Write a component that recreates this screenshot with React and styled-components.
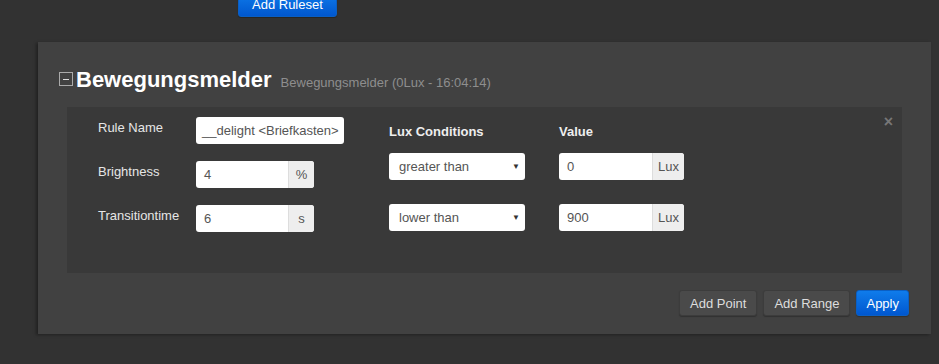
import styled, { createGlobalStyle } from "styled-components";

const GlobalStyle = createGlobalStyle`
  html, body {
    margin: 0;
    padding: 0;
    background: #323232;
    font-family: "Liberation Sans", Arial, sans-serif;
  }
`;

const Page = styled.div`
  width: 939px;
  height: 364px;
  overflow: hidden;
  background: #323232;
`;

const TopBar = styled.div`
  height: 18px;
  display: flex;
  align-items: flex-end;
  padding-left: 238px;
  overflow: hidden;
`;

const Button = styled.button`
  height: 26px;
  padding: 0 ${(p) => p.$pad || 10}px;
  font-family: inherit;
  font-size: 13px;
  border-radius: 3px;
  cursor: pointer;
  color: ${(p) => (p.$primary ? "#fff" : "#ddd")};
  background: ${(p) =>
    p.$primary ? "linear-gradient(#0f7ceb, #0057cf)" : "#4a4a4a"};
  border: 1px solid ${(p) => (p.$primary ? "#0a5fc4" : "#3c3c3c")};
  box-shadow: 0 1px 1px rgba(0, 0, 0, 0.25);
`;

const RulesetButton = styled(Button)`
  margin-bottom: 1px;
`;

const Panel = styled.div`
  margin: 24px 0 0 38px;
  width: 893px;
  height: 292px;
  box-sizing: border-box;
  background: #414141;
  box-shadow: -2px 1px 3px rgba(0, 0, 0, 0.35);
  padding: 25px 22px 0 21px;
`;

const TitleRow = styled.div`
  display: flex;
  align-items: baseline;
  gap: 3px;
  height: 33px;
`;

const Toggle = styled.span`
  position: relative;
  width: 12px;
  height: 12px;
  border: 1px solid #aaa;
  align-self: flex-start;
  margin-top: 5px;
  &::after {
    content: "";
    position: absolute;
    left: 3px;
    right: 3px;
    top: 5.5px;
    height: 1px;
    background: #ddd;
  }
`;

const Title = styled.h2`
  margin: 0;
  font-size: 22px;
  font-weight: bold;
  color: #fff;
`;

const Subtitle = styled.span`
  margin-left: 6px;
  font-size: 13px;
  color: #8e8e8e;
`;

const Well = styled.div`
  position: relative;
  margin: 7px 7px 0 8px;
  height: 166px;
  background: #393939;
  display: flex;
  padding: 10px 0 0 31px;
  box-sizing: border-box;
`;

const Close = styled.span`
  position: absolute;
  right: 9px;
  top: 6px;
  font-size: 16px;
  font-weight: bold;
  color: #777;
`;

const Form = styled.div`
  display: flex;
  flex-direction: column;
  gap: 17px;
  width: 291px;
`;

const FormRow = styled.div`
  display: flex;
  height: 27px;
`;

const Label = styled.label`
  width: 98px;
  padding-top: 3px;
  font-size: 13px;
  color: #e6e6e6;
`;

const InputGroup = styled.div`
  display: flex;
  width: ${(p) => p.$width}px;
  height: 27px;
  background: #fff;
  border-radius: 3px;
  overflow: hidden;
  box-sizing: border-box;
`;

const Field = styled.span`
  flex: 1;
  display: flex;
  align-items: center;
  padding-left: ${(p) => p.$pad || 8}px;
  font-size: 13px;
  color: #555;
  white-space: nowrap;
  overflow: hidden;
`;

const Addon = styled.span`
  width: ${(p) => p.$width}px;
  display: flex;
  align-items: center;
  justify-content: center;
  background: #eee;
  border-left: 1px solid #ddd;
  font-size: 13px;
  color: #555;
`;

const Table = styled.div`
  display: grid;
  grid-template-columns: 170px 125px;
  grid-template-rows: 36px 27px 27px;
  align-content: start;
  & > :nth-child(n + 5) {
    margin-top: 24px;
  }
`;

const HeadCell = styled.div`
  padding-top: 7px;
  font-size: 13px;
  font-weight: bold;
  color: #eee;
`;

const Select = styled.div`
  width: 136px;
  height: 27px;
  background: #fff;
  border-radius: 3px;
  display: flex;
  align-items: center;
  justify-content: space-between;
  padding: 0 5px 0 10px;
  box-sizing: border-box;
  font-size: 13px;
  color: #555;
`;

const Arrow = styled.span`
  font-size: 8px;
  color: #333;
`;

const Actions = styled.div`
  display: flex;
  justify-content: flex-end;
  gap: 6px;
  margin-top: 17px;
`;

const luxRows = [
  { cond: "greater than", value: "0" },
  { cond: "lower than", value: "900" },
];

export default function App() {
  return (
    <Page>
      <GlobalStyle />
      <TopBar>
        <RulesetButton $primary $pad={13}>Add Ruleset</RulesetButton>
      </TopBar>
      <Panel>
        <TitleRow>
          <Toggle />
          <Title>Bewegungsmelder</Title>
          <Subtitle>Bewegungsmelder (0Lux - 16:04:14)</Subtitle>
        </TitleRow>
        <Well>
          <Close>×</Close>
          <Form>
            <FormRow>
              <Label>Rule Name</Label>
              <InputGroup $width={148}>
                <Field $pad={6}>__delight &lt;Briefkasten&gt;</Field>
              </InputGroup>
            </FormRow>
            <FormRow>
              <Label>Brightness</Label>
              <InputGroup $width={118}>
                <Field>4</Field>
                <Addon $width={25}>%</Addon>
              </InputGroup>
            </FormRow>
            <FormRow>
              <Label>Transitiontime</Label>
              <InputGroup $width={118}>
                <Field>6</Field>
                <Addon $width={25}>s</Addon>
              </InputGroup>
            </FormRow>
          </Form>
          <Table>
            <HeadCell>Lux Conditions</HeadCell>
            <HeadCell>Value</HeadCell>
            {luxRows.map((r) => [
              <Select key={r.cond + "s"}>
                {r.cond}
                <Arrow>▼</Arrow>
              </Select>,
              <InputGroup key={r.cond + "v"} $width={125}>
                <Field>{r.value}</Field>
                <Addon $width={31}>Lux</Addon>
              </InputGroup>,
            ])}
          </Table>
        </Well>
        <Actions>
          <Button>Add Point</Button>
          <Button>Add Range</Button>
          <Button $primary $pad={9}>Apply</Button>
        </Actions>
      </Panel>
    </Page>
  );
}
